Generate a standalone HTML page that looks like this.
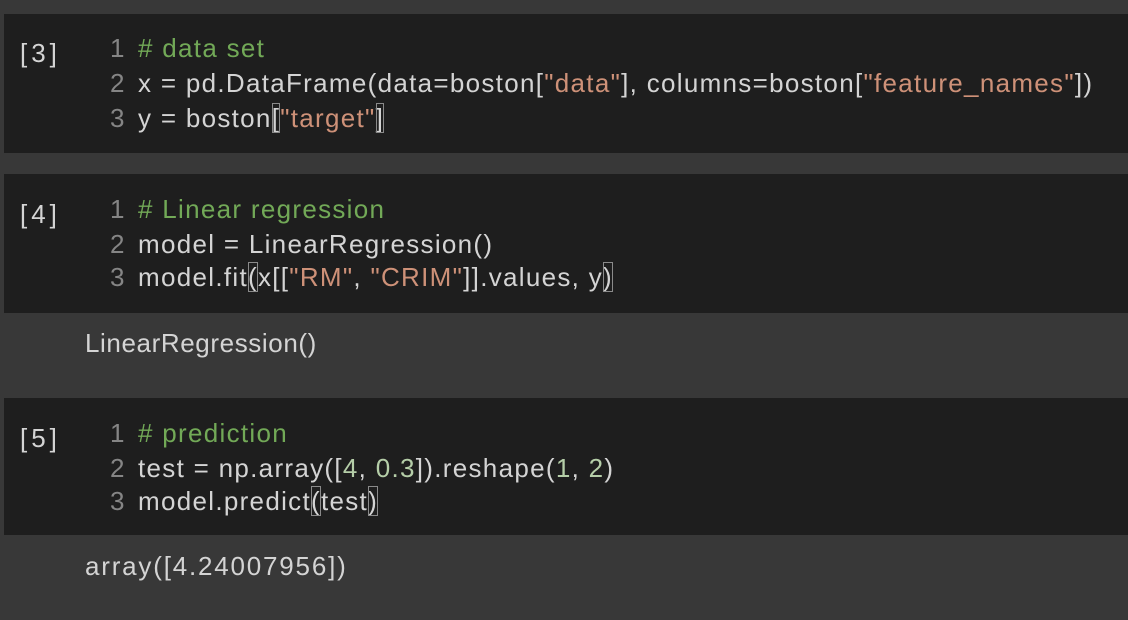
<!DOCTYPE html>
<html><head><style>
body{margin:0;width:1128px;height:620px;background:#383838;overflow:hidden;font-family:"Liberation Sans",sans-serif;font-size:26px;color:#d4d4d4;position:relative}
.cell{position:absolute;left:4px;right:0;background:#1e1e1e}
.p{position:absolute;left:20px;color:#d4d4d4;letter-spacing:4px}
.l{position:absolute;left:110px;white-space:pre;letter-spacing:1.3px}
.n{color:#858585;display:inline-block;width:28px;letter-spacing:0}
.c{color:#72a957}.s{color:#ce9178}.num{color:#b5cea8}
.b{outline:1.5px solid #8a8a8a;outline-offset:-1px}
.o{position:absolute;left:85px;white-space:pre;letter-spacing:0.6px}
</style></head><body>
<div class="cell" style="top:14px;height:139px"></div>
<div class="p" style="top:38px">[3]</div>
<div class="l" style="top:33px"><span class="n">1</span><span class="c"># data set</span></div>
<div class="l" style="top:68px"><span class="n">2</span>x = pd.DataFrame(data=boston[<span class="s">"data"</span>], columns=boston[<span class="s">"feature_names"</span>])</div>
<div class="l" style="top:103px"><span class="n">3</span>y = boston<span class="b">[</span><span class="s">"target"</span><span class="b">]</span></div>

<div class="cell" style="top:174px;height:139px"></div>
<div class="p" style="top:199px">[4]</div>
<div class="l" style="top:194px"><span class="n">1</span><span class="c"># Linear regression</span></div>
<div class="l" style="top:229px"><span class="n">2</span>model = LinearRegression()</div>
<div class="l" style="top:262px"><span class="n">3</span>model.fit<span class="b">(</span>x[[<span class="s">"RM"</span>, <span class="s">"CRIM"</span>]].values, y<span class="b">)</span></div>
<div class="o" style="top:328px">LinearRegression()</div>

<div class="cell" style="top:398px;height:137px"></div>
<div class="p" style="top:423px">[5]</div>
<div class="l" style="top:418px"><span class="n">1</span><span class="c"># prediction</span></div>
<div class="l" style="top:453px"><span class="n">2</span>test = np.array([<span class="num">4</span>, <span class="num">0.3</span>]).reshape(<span class="num">1</span>, <span class="num">2</span>)</div>
<div class="l" style="top:486px"><span class="n">3</span>model.predict<span class="b">(</span>test<span class="b">)</span></div>
<div class="o" style="top:551px;letter-spacing:1.8px">array([4.24007956])</div>
</body></html>
